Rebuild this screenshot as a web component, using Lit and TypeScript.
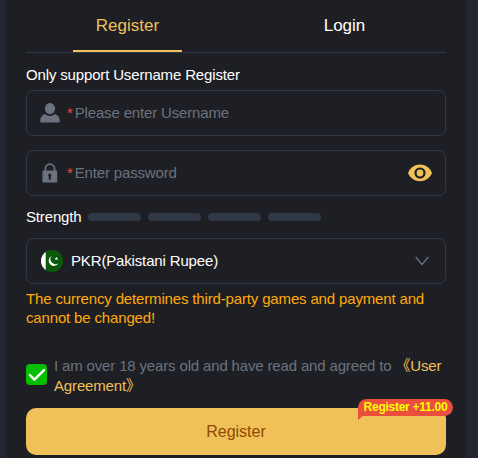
import { LitElement, html, css, svg } from "lit";
import { customElement, state } from "lit/decorators.js";
import { classMap } from "lit/directives/class-map.js";

const userIcon = svg`<svg width="20" height="20" viewBox="0 0 20 20" fill="#6b727f">
  <ellipse cx="10" cy="5.6" rx="5.1" ry="5.5"/>
  <path d="M4.6 11Q10 15 15.4 11Q19.8 13 19.8 18.2Q19.8 19.6 18.4 19.6H1.6Q.2 19.6 .2 18.2Q.2 13 4.6 11Z"/>
</svg>`;

const lockIcon = svg`<svg width="20" height="20" viewBox="0 0 20 20">
  <path d="M5.4 8.5V6a4.6 4.9 0 0 1 9.2 0v2.5" fill="none" stroke="#6b727f" stroke-width="1.8"/>
  <rect x="2.4" y="7.6" width="14.8" height="12" rx="1.2" fill="#6b727f"/>
  <path d="M9.8 10.4a1.9 1.9 0 0 1 1 3.3V16.8H8.8v-3.1a1.9 1.9 0 0 1 1-3.3Z" fill="#1e1f24"/>
</svg>`;

const eyeIcon = svg`<svg width="24" height="18" viewBox="0 0 24 18">
  <path d="M0 9C2.3 3.6 6.7 .6 12 .6S21.7 3.6 24 9C21.7 14.4 17.3 17.2 12 17.2S2.3 14.4 0 9Z" fill="#f0c059"/>
  <circle cx="12" cy="9" r="4.5" fill="#f0c059" stroke="#1e1f24" stroke-width="2.2"/>
</svg>`;

const flagIcon = svg`<svg width="22" height="22" viewBox="0 0 22 22">
  <defs><clipPath id="disc"><circle cx="11" cy="11" r="11"/></clipPath></defs>
  <g clip-path="url(#disc)">
    <rect width="22" height="22" fill="#0c590b"/>
    <rect width="4.7" height="22" fill="#fff"/>
    <path d="M10.6 6A5.2 5.2 0 1 0 17.4 13.2A5 5 0 0 1 10.6 6Z" fill="#fff"/>
    <path d="M15.4 6.8l.5 1.1 1.2.1-.9.8.3 1.2-1.1-.6-1 .6.2-1.2-.9-.8 1.2-.1Z" fill="#fff"/>
  </g>
</svg>`;

const chevronIcon = svg`<svg width="14" height="10" viewBox="0 0 14 10">
  <path d="M.7 1L7 8.4L13.3 1" fill="none" stroke="#6b727f" stroke-width="1.3"/>
</svg>`;

const checkIcon = svg`<svg width="21" height="21" viewBox="0 0 21 21">
  <path d="M3.9 11L8.4 15.6L18 6.2" fill="none" stroke="#fff" stroke-width="2.5" stroke-linecap="round" stroke-linejoin="round"/>
</svg>`;

@customElement("app-root")
export class AppRoot extends LitElement {
  @state() private tab = "Register";

  static styles = css`
    :host {
      display: block;
      height: 458px;
      overflow: hidden;
      background: #212631;
      font: 15px/20px "Liberation Sans", Arial, "Noto Sans CJK SC", sans-serif;
      letter-spacing: -0.155px;
      color: #fff;
    }
    * { box-sizing: border-box; }
    svg { display: block; flex: none; }
    .panel {
      height: 458px;
      margin: 0 12px 0 6px;
      padding: 0 20px;
      background: #1e1f24;
    }
    .tabs {
      display: flex;
      justify-content: space-between;
      height: 53px;
      border-bottom: 1px solid #2f3744;
      letter-spacing: 0;
    }
    .tab {
      display: flex;
      justify-content: center;
      width: 203px;
      height: 52px;
      font-size: 17px;
      line-height: 52px;
      cursor: pointer;
    }
    .tab span { width: 109px; text-align: center; }
    .active { color: #f0c059; }
    .active span { border-bottom: 2px solid #f0c059; }
    .hint { height: 37px; padding-top: 12px; }
    .field {
      display: flex;
      align-items: center;
      height: 46px;
      margin-bottom: 14px;
      padding: 0 13px;
      border: 1px solid #2f3744;
      border-radius: 7px;
      color: #6b727f;
    }
    .star { margin: 0 2px 0 7px; color: #ea4e3d; }
    .grow { flex: 1; }
    .strength {
      display: flex;
      align-items: center;
      gap: 7px;
      height: 42px;
      margin-top: -14px;
    }
    .strength .label { width: 55px; }
    .bar { width: 53px; height: 8px; border-radius: 4px; background: #313845; }
    .currency { margin: 0; padding: 0 16px 0 14px; color: #fff; }
    .currency .grow { margin-left: 8px; }
    .warn { margin-top: 5px; height: 67px; line-height: 19px; color: #ffaa09; }
    .agree { display: flex; gap: 7px; height: 52px; color: #6b727f; white-space: nowrap; }
    .check { flex: none; width: 21px; height: 21px; margin-top: 8px; border-radius: 4px; background: #04be02; }
    .link { color: #f0c059; }
    .submit {
      position: relative;
      display: block;
      width: 420px;
      height: 47px;
      border: 0;
      border-radius: 10px;
      background: #f0c059;
      color: #8f4a00;
      font: inherit;
      font-size: 16px;
      letter-spacing: 0;
      text-align: center;
    }
    .badge {
      position: absolute;
      top: -9px;
      left: 332px;
      width: 95px;
      height: 17px;
      border-radius: 9px 9px 9px 0;
      background: #ea4e3d;
      color: #ff0;
      font-size: 12px;
      font-weight: bold;
      letter-spacing: -0.26px;
      line-height: 16px;
    }
    .badge::after {
      content: "";
      position: absolute;
      top: 16px;
      left: 0;
      border-top: 5px solid #ea4e3d;
      border-right: 6px solid transparent;
    }
  `;

  render() {
    return html`
      <div class="panel">
        <div class="tabs">
          ${["Register", "Login"].map(
            (t) => html`<div class=${classMap({ tab: true, active: this.tab === t })} @click=${() => (this.tab = t)}><span>${t}</span></div>`
          )}
        </div>
        <div class="hint">Only support Username Register</div>
        <div class="field">${userIcon}<span class="star">*</span><span class="grow">Please enter Username</span></div>
        <div class="field">${lockIcon}<span class="star">*</span><span class="grow">Enter password</span>${eyeIcon}</div>
        <div class="strength">
          <span class="label">Strength</span>
          ${[0, 1, 2, 3].map(() => html`<span class="bar"></span>`)}
        </div>
        <div class="field currency">${flagIcon}<span class="grow">PKR(Pakistani Rupee)</span>${chevronIcon}</div>
        <div class="warn">The currency determines third-party games and payment and<br />cannot be changed!</div>
        <div class="agree">
          <span class="check">${checkIcon}</span>
          <div>I am over 18 years old and have read and agreed to <span class="link">《User<br />Agreement》</span></div>
        </div>
        <button class="submit">Register<span class="badge">Register +11.00</span></button>
      </div>
    `;
  }
}
